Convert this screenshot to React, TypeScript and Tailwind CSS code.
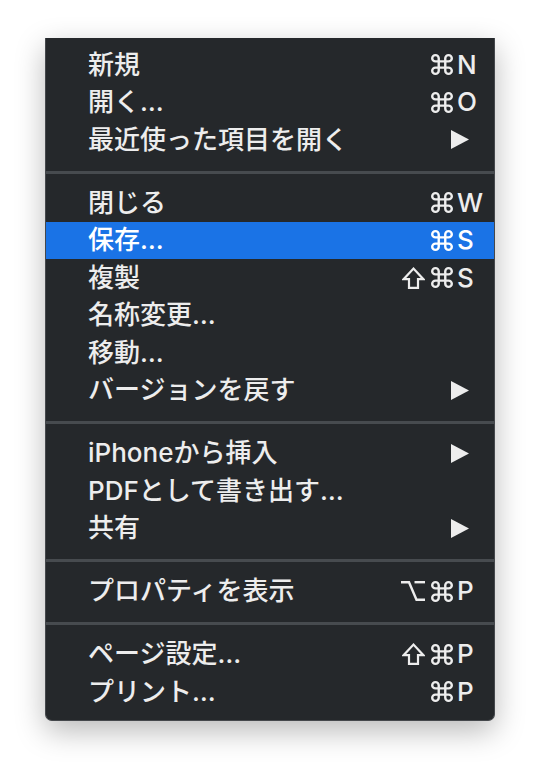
import React from "react";

type Mod = "cmd" | "shift" | "opt";
type Item =
  | { kind: "item"; label: string; mods?: Mod[]; keyChar?: string; sub?: boolean; active?: boolean }
  | { kind: "sep" };

const items: Item[] = [
  { kind: "item", label: "新規", mods: ["cmd"], keyChar: "N" },
  { kind: "item", label: "開く…", mods: ["cmd"], keyChar: "O" },
  { kind: "item", label: "最近使った項目を開く", sub: true },
  { kind: "sep" },
  { kind: "item", label: "閉じる", mods: ["cmd"], keyChar: "W" },
  { kind: "item", label: "保存…", mods: ["cmd"], keyChar: "S", active: true },
  { kind: "item", label: "複製", mods: ["shift", "cmd"], keyChar: "S" },
  { kind: "item", label: "名称変更…" },
  { kind: "item", label: "移動…" },
  { kind: "item", label: "バージョンを戻す", sub: true },
  { kind: "sep" },
  { kind: "item", label: "iPhoneから挿入", sub: true },
  { kind: "item", label: "PDFとして書き出す…" },
  { kind: "item", label: "共有", sub: true },
  { kind: "sep" },
  { kind: "item", label: "プロパティを表示", mods: ["opt", "cmd"], keyChar: "P" },
  { kind: "sep" },
  { kind: "item", label: "ページ設定…", mods: ["shift", "cmd"], keyChar: "P" },
  { kind: "item", label: "プリント…", mods: ["cmd"], keyChar: "P" },
];

function Arrow() {
  return (
    <svg width="18" height="19" viewBox="0 0 18 19" className="shrink-0 mr-[18px]">
      <path d="M0 0 L18 9.5 L0 19 Z" fill="currentColor" />
    </svg>
  );
}

function CmdIcon() {
  return (
    <svg width="22" height="21" viewBox="1.9 1.9 20.2 20.2" className="shrink-0" preserveAspectRatio="none">
      <path
        d="M18 3a3 3 0 0 0-3 3v12a3 3 0 0 0 3 3 3 3 0 0 0 3-3 3 3 0 0 0-3-3H6a3 3 0 0 0-3 3 3 3 0 0 0 3 3 3 3 0 0 0 3-3V6a3 3 0 0 0-3-3 3 3 0 0 0-3 3 3 3 0 0 0 3 3h12a3 3 0 0 0 3-3 3 3 0 0 0-3-3z"
        fill="none"
        stroke="currentColor"
        strokeWidth="2.2"
      />
    </svg>
  );
}

function ShiftIcon() {
  return (
    <svg width="23" height="22" viewBox="0 0 23 22" className="shrink-0">
      <path
        d="M7 20.8V12.2H1.6L11.5 1.6L21.4 12.2H16V20.8Z"
        fill="none"
        stroke="currentColor"
        strokeWidth="2.2"
        strokeLinejoin="miter"
      />
    </svg>
  );
}

function OptIcon() {
  return (
    <svg width="24" height="20" viewBox="0 0 24 20" className="shrink-0">
      <path d="M0 1.2H8L15.5 18.8H24" fill="none" stroke="currentColor" strokeWidth="2.4" />
      <path d="M13.5 1.2H24" fill="none" stroke="currentColor" strokeWidth="2.4" />
    </svg>
  );
}

function ModIcon({ m }: { m: Mod }) {
  if (m === "cmd") return <CmdIcon />;
  if (m === "shift") return <ShiftIcon />;
  return <OptIcon />;
}

export default function App() {
  return (
    <div className="w-[540px] h-[774px] bg-white pt-[38px] pl-[45px]">
      <div
        className="w-[450px] bg-[#25282b] border-x border-b border-[#45484c] rounded-b-[7px] pt-[8px] pb-[9px] shadow-[0_10px_30px_rgba(0,0,0,0.28)] text-[#ededed] text-[26px] font-medium"
        style={{ fontFamily: 'Inter, "Noto Sans CJK JP", "DejaVu Sans", sans-serif' }}
      >
        {items.map((it, i) =>
          it.kind === "sep" ? (
            <div key={i} className="pt-[12px] pb-[10.5px]">
              <div className="h-[3px] bg-[#474b4f]" />
            </div>
          ) : (
            <div
              key={i}
              className={`h-[37.5px] flex items-center pl-[42px] pr-[7px] ${it.active ? "bg-[#1a73e6] text-white" : ""}`}
            >
              <span className="flex-1 whitespace-nowrap leading-none">{it.label}</span>
              {it.sub ? (
                <Arrow />
              ) : it.keyChar ? (
                <>
                  <span className="flex items-center gap-[6px] mr-[4px]">
                    {it.mods?.map((m, j) => <ModIcon key={j} m={m} />)}
                  </span>
                  <span className="w-[30px] leading-none">{it.keyChar}</span>
                </>
              ) : null}
            </div>
          )
        )}
      </div>
    </div>
  );
}
